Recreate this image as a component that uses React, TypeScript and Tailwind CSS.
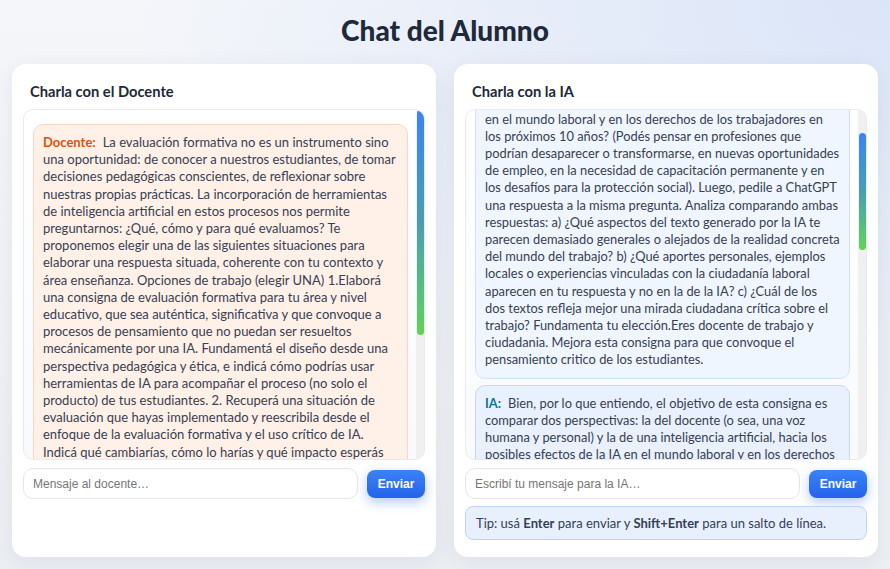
import { useLayoutEffect, useRef } from 'react';

const docenteText =
  'La evaluación formativa no es un instrumento sino una oportunidad: de conocer a nuestros estudiantes, de tomar decisiones pedagógicas conscientes, de reflexionar sobre nuestras propias prácticas. La incorporación de herramientas de inteligencia artificial en estos procesos nos permite preguntarnos: ¿Qué, cómo y para qué evaluamos? Te proponemos elegir una de las siguientes situaciones para elaborar una respuesta situada, coherente con tu contexto y área enseñanza. Opciones de trabajo (elegir UNA) 1.Elaborá una consigna de evaluación formativa para tu área y nivel educativo, que sea auténtica, significativa y que convoque a procesos de pensamiento que no puedan ser resueltos mecánicamente por una IA. Fundamentá el diseño desde una perspectiva pedagógica y ética, e indicá cómo podrías usar herramientas de IA para acompañar el proceso (no solo el producto) de tus estudiantes. 2. Recuperá una situación de evaluación que hayas implementado y reescribila desde el enfoque de la evaluación formativa y el uso crítico de IA. Indicá qué cambiarías, cómo lo harías y qué impacto esperás lograr en los aprendizajes de tus estudiantes? 3.Podés diseñar una rúbrica o lista de cotejo que incluya criterios vinculados al uso ético y crítico de la IA, y explicar cómo la utilizarías para ofrecer retroalimentación a lo largo del proceso. Compartí tu producción en el foro y comentá el trabajo de al menos un colega, señalando fortalezas y posibles mejoras.';

const alumnoIntro =
  'Te comparto la consigna que armé para mis estudiantes de sexto año. Escribí un texto breve en el que respondas: ¿Qué impacto creés que puede llegar a tener la inteligencia artificial ';

const alumnoRest =
  'en el mundo laboral y en los derechos de los trabajadores en los próximos 10 años? (Podés pensar en profesiones que podrían desaparecer o transformarse, en nuevas oportunidades de empleo, en la necesidad de capacitación permanente y en los desafíos para la protección social). Luego, pedile a ChatGPT una respuesta a la misma pregunta. Analiza comparando ambas respuestas: a) ¿Qué aspectos del texto generado por la IA te parecen demasiado generales o alejados de la realidad concreta del mundo del trabajo? b) ¿Qué aportes personales, ejemplos locales o experiencias vinculadas con la ciudadanía laboral aparecen en tu respuesta y no en la de la IA? c) ¿Cuál de los dos textos refleja mejor una mirada ciudadana crítica sobre el trabajo? Fundamenta tu elección.Eres docente de trabajo y ciudadania. Mejora esta consigna para que convoque el pensamiento critico de los estudiantes.';

const iaText =
  'Bien, por lo que entiendo, el objetivo de esta consigna es comparar dos perspectivas: la del docente (o sea, una voz humana y personal) y la de una inteligencia artificial, hacia los posibles efectos de la IA en el mundo laboral y en los derechos de los trabajadores. La propuesta ya tiene una buena base, pero podemos fortalecerla para que los estudiantes no se limiten a señalar diferencias superficiales entre los textos. Algunas sugerencias: 1) Situar la pregunta en un contexto cercano: pedir que elijan un sector de trabajo de su localidad (comercio, industria, salud, campo, servicios) y que piensen cómo podría cambiar con la llegada de la IA. 2) Incorporar voces reales: que entrevisten a un trabajador o trabajadora de ese sector y recuperen su mirada sobre los cambios tecnológicos. 3) Explicitar criterios de análisis: en lugar de preguntar solo qué texto es "mejor", proponer que evalúen la precisión de los datos, la presencia de ejemplos concretos, el lugar que ocupan los derechos laborales y quiénes quedan invisibilizados en cada respuesta. 4) Promover la toma de posición: cerrar la actividad con una breve argumentación en la que cada estudiante proponga una medida concreta para proteger a los trabajadores frente a la automatización.';

const bubble = 'rounded-[10px] border p-[9px] leading-[17.2px]';

// chat area: scrolled content + a drawn scrollbar (headless Chrome hides real ones)
function ChatBox({
  children,
  thumbTop,
  thumbHeight,
  contentRef,
}: {
  children: React.ReactNode;
  thumbTop: number;
  thumbHeight: number;
  contentRef?: React.RefObject<HTMLDivElement | null>;
}) {
  return (
    <div className="flex h-[351px] shrink-0 overflow-hidden rounded-[10px] border border-[#e7eaef] bg-gradient-to-b from-white to-[#f8fafc]">
      <div ref={contentRef} className="relative flex-1 overflow-hidden pt-[14px] pb-[10px] pl-[9px] pr-[8px]">
        {children}
      </div>
      <div className="w-[8px] shrink-0 bg-[#f0f0f0]">
        <div
          className="ml-[1px] w-[7px] rounded-full bg-gradient-to-b from-[#3b82f6] via-[#4b9eae] to-[#62d34f]"
          style={{ marginTop: thumbTop, height: thumbHeight }}
        />
      </div>
    </div>
  );
}

function Card({ title, children }: { title: string; children: React.ReactNode }) {
  return (
    <section className="flex min-h-0 flex-col overflow-hidden rounded-[14px] bg-white px-[11px] pt-[18px] shadow-[0_6px_24px_rgba(30,41,59,0.07)]">
      <h2 className="mb-[9px] px-[7px] text-[14.7px] font-bold leading-[18px] text-[#1e293b]">{title}</h2>
      {children}
    </section>
  );
}

function InputRow({ placeholder }: { placeholder: string }) {
  return (
    <div className="mt-[8px] flex items-center gap-[9px]">
      <input
        placeholder={placeholder}
        className="h-[31px] flex-1 rounded-[10px] border border-[#e3e6eb] bg-white px-[9px] font-['Liberation_Sans',Arial,sans-serif] text-[12px] text-[#333] placeholder:text-[#767676] outline-none"
      />
      <button className="h-[28px] w-[58px] rounded-[8px] bg-gradient-to-b from-[#3b82f6] to-[#2563eb] font-['Liberation_Sans',Arial,sans-serif] text-[12px] font-bold text-white shadow-[0_4px_12px_rgba(37,99,235,0.35)]">
        Enviar
      </button>
    </div>
  );
}

export default function App() {
  const iaRef = useRef<HTMLDivElement>(null);
  const markRef = useRef<HTMLSpanElement>(null);

  useLayoutEffect(() => {
    if (iaRef.current && markRef.current) iaRef.current.scrollTop = markRef.current.offsetTop - 1;
  }, []);

  return (
    <div className="flex h-screen flex-col overflow-hidden bg-[#eef1f6] bg-[radial-gradient(ellipse_at_top_right,#dbe5f8_0%,rgba(238,241,246,0)_60%),linear-gradient(180deg,#f4f6fa,#eceff4)] px-3 pb-3 font-['Lato',sans-serif] text-[#374151]">
      <h1 className="flex h-16 shrink-0 items-center justify-center pb-[4px] text-[28px] font-black text-[#1e293b]">
        Chat del Alumno
      </h1>
      <div className="grid min-h-0 flex-1 grid-cols-2 grid-rows-1 gap-[18px]">
        <Card title="Charla con el Docente">
          <ChatBox thumbTop={0} thumbHeight={225}>
            <div className={`${bubble} border-[#fbd5c2] bg-[#fff0e8] text-[13px]`}>
              <span className="mr-[7px] font-bold text-[#e0500f]">Docente:</span>
              {docenteText}
            </div>
          </ChatBox>
          <InputRow placeholder="Mensaje al docente…" />
        </Card>

        <Card title="Charla con la IA">
          <ChatBox thumbTop={23} thumbHeight={117} contentRef={iaRef}>
            <div className="flex flex-col gap-[6px]">
              <div className={`${bubble} border-[#cfe2fb] bg-[#eff6ff] text-[12.85px]`}>
                <span className="mr-[7px] font-bold text-[#1d4ed8]">Vos:</span>
                {alumnoIntro}
                <span ref={markRef}>{alumnoRest}</span>
              </div>
              <div className={`${bubble} border-[#c5d8fb] bg-[#e9f0fe] text-[12.85px]`}>
                <span className="mr-[7px] font-bold text-[#0e7490]">IA:</span>
                {iaText}
              </div>
            </div>
          </ChatBox>
          <InputRow placeholder="Escribí tu mensaje para la IA…" />
          <div className="mt-[7px] rounded-[8px] border border-[#bfd3fa] bg-[#e8f0fe] px-[10px] py-[7px] text-[13px] leading-[18px] text-[#334155]">
            Tip: usá <b>Enter</b> para enviar y <b>Shift+Enter</b> para un salto de línea.
          </div>
        </Card>
      </div>
    </div>
  );
}
